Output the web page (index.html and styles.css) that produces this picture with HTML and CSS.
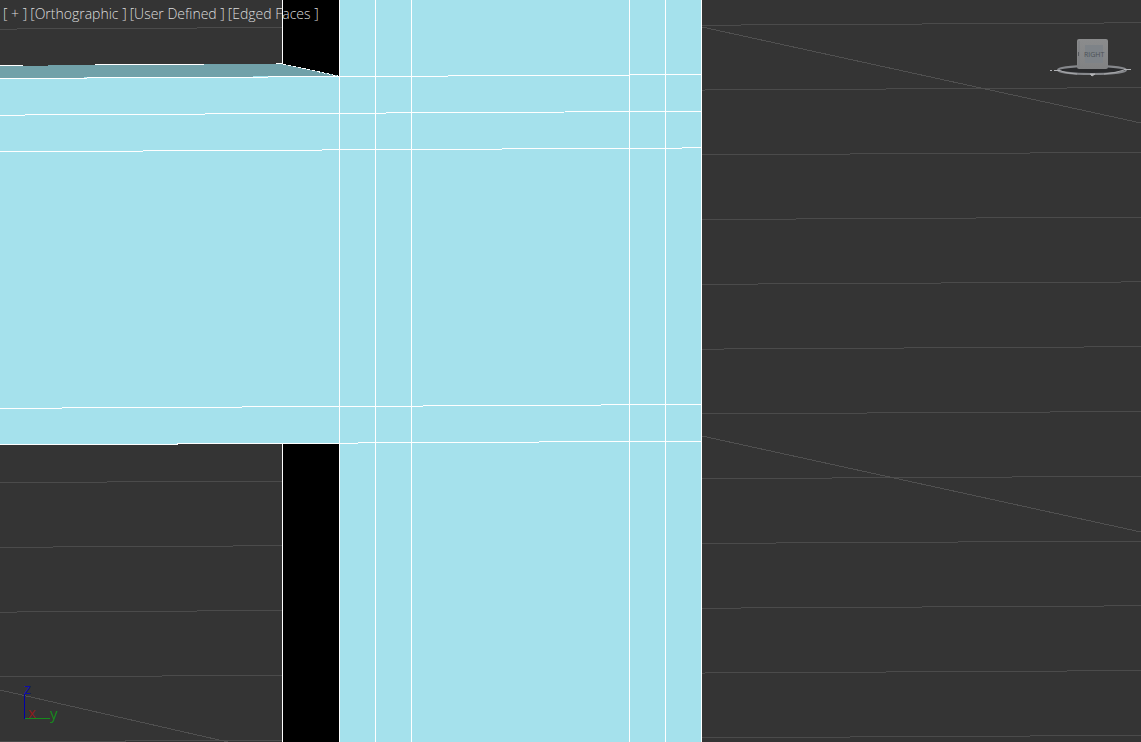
FILE: index.html
```html
<!DOCTYPE html>
<html lang="en">
<head>
<meta charset="utf-8">
<title>Viewport</title>
<link rel="stylesheet" href="styles.css">
</head>
<body>
<main class="viewport">
  <svg class="scene" viewBox="0 0 1141 742" preserveAspectRatio="xMinYMin slice" role="img" aria-label="Orthographic model view">
    <g class="grid">
      <path d="M0 29.1L1141 22.8M0 93.9L1141 87.6M0 158.7L1141 152.4M0 223.4L1141 217.1M0 288.2L1141 281.9M0 353L1141 346.7M0 417.8L1141 411.5M0 482.6L1141 476.3M0 547.3L1141 541M0 612.1L1141 605.8M0 676.9L1141 670.6M0 741.7L1141 735.4"/>
      <path class="grid-diagonal" d="M702 27L1141 123M702 436L1141 532M0 690L228 742"/>
    </g>
    <g class="solid">
      <path class="shadow" d="M283 0H340V77L283 64ZM283 443H340V742H283Z"/>
      <path class="top-face" d="M0 66L96 65L283 64L340 76V79H0Z"/>
      <path class="front-face" d="M340 0H702V742H340V444H0V78L340 76Z"/>
    </g>
    <g class="edges">
      <path d="M282.5 0V64M282.5 444V742M339.5 0V742M375.5 0V742M411.5 0V742M629.5 0V742M665.5 0V742M701.5 0V742"/>
      <path d="M0 78.5L702 74.6M0 115.15L702 111.25M0 151.8L702 147.9M0 408.35L702 404.45M0 445L702 441.1"/>
      <path d="M0 65.5H23M95 64.5H204M276 63.5H283"/>
      <path class="dashed" d="M283 64L340 76.500"/>
    </g>
    <g class="axes">
      <path class="axis-z" d="M24.5 694V719"/>
      <path class="axis-y" d="M25 718.5H50"/>
      <text class="label-z" x="24" y="694">z</text>
      <text class="label-x" x="28" y="718">x</text>
      <text class="label-y" x="50" y="719">y</text>
    </g>
  </svg>
  <nav class="labels" aria-label="Viewport labels">
    <button type="button">[ + ]</button>
    <button type="button">[Orthographic ]</button>
    <button type="button">[User Defined ]</button>
    <button type="button">[Edged Faces ]</button>
  </nav>
  <button class="cube" type="button" aria-label="Right view">
    <svg viewBox="0 0 82 42" width="82" height="42">
      <defs><linearGradient id="face" x1="0" y1="0" x2="0" y2="1"><stop offset="0" stop-color="#8b8c8d"/><stop offset="1" stop-color="#818283"/></linearGradient></defs>
      <ellipse cx="42" cy="35" rx="34" ry="4" fill="#292a2c" stroke="#85878b" stroke-width="2"/>
      <path d="M9 35Q14 38 27 39M54 39Q66 38 74 35" fill="none" stroke="#a6a7aa" stroke-width="1"/>
      <path d="M0 35.500H2M4 35.500H10M40 39H45L42 41ZM74 34.500H81" fill="#bbb" stroke="#b0b1b4"/>
      <rect x="27" y="4" width="31" height="30" rx="2" fill="url(#face)"/>
      <path d="M29 6V32" stroke="#7b7d80"/>
      <rect x="35" y="10" width="18" height="18" fill="#7e8388"/>
      <path d="M28.500 17V21" stroke="#55585d"/>
      <text class="cube-label" x="34" y="22">RIGHT</text>
    </svg>
  </button>
</main>
</body>
</html>
```
FILE: styles.css
```css
body {
  margin: 0;
  background: #343434;
}

.viewport {
  position: relative;
  height: 100vh;
  overflow: hidden;
  font-family: "Open Sans", "Noto Sans", sans-serif;
}

.scene {
  display: block;
  width: 100%;
  height: 100%;
  fill: none;
}

.grid,
.edges,
.axes path {
  shape-rendering: crispEdges;
}

.grid {
  stroke: #4b4b4b;
}

.grid .grid-diagonal {
  stroke: #505050;
}

.solid {
  shape-rendering: crispEdges;
}

.shadow {
  fill: #000;
}

.top-face {
  fill: #71a1a9;
}

.front-face {
  fill: #a5e1ec;
}

.edges {
  stroke: #fff;
}

.edges .dashed {
  stroke-dasharray: 3 2;
}

.axes {
  font-family: "Open Sans", "Noto Sans", sans-serif;
  font-size: 15px;
}

.axis-z {
  stroke: #0000a8;
}

.axis-y {
  stroke: #168a1c;
}

.label-z {
  fill: #0c0ca8;
}

.label-x {
  fill: #8c1c1c;
}

.label-y {
  fill: #168a1c;
}

.labels {
  position: absolute;
  top: 4px;
  left: 3px;
  display: flex;
  gap: 3px;
}

.labels button {
  padding: 0;
  border: 0;
  background: none;
  color: #dcdcdc;
  font-family: "Open Sans", "Noto Sans", sans-serif;
  font-size: 14px;
  font-weight: 300;
  line-height: 20px;
  white-space: nowrap;
}

.cube {
  position: absolute;
  top: 35px;
  right: 9px;
  padding: 0;
  border: 0;
  background: none;
}

.cube svg {
  display: block;
}

.cube-label {
  fill: #4d5156;
  font-family: "Open Sans", sans-serif;
  font-size: 7px;
}
```
